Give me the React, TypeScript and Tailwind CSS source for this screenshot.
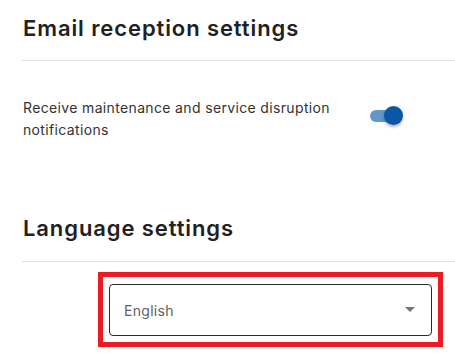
import React, { useState } from 'react';

const font = { fontFamily: 'Inter, "Noto Sans", sans-serif' };

const Toggle = ({ on, onChange }: { on: boolean; onChange: () => void }) => (
  <button
    type="button"
    onClick={onChange}
    className="relative h-[20px] w-[36px] shrink-0 cursor-pointer"
    aria-pressed={on}
  >
    <span className={`absolute left-[2px] top-[4px] h-[12px] w-[30px] rounded-full ${on ? 'bg-[#6397c9]' : 'bg-[#bdbdbd]'}`} />
    <span
      className={`absolute top-0 h-[19px] w-[19px] rounded-full shadow-[0_2px_3px_rgba(0,0,0,0.3)] ${on ? 'left-[16px] bg-[#0a57a5]' : 'left-0 bg-[#fafafa]'}`}
    />
  </button>
);

export default function App() {
  const [notify, setNotify] = useState(true);
  const [lang, setLang] = useState('English');

  return (
    <div className="min-h-screen bg-white pl-[22px] pt-[12px]" style={font}>
      <section>
        <h2 className="pl-px text-[22px] font-semibold leading-[32px] tracking-[0.9px] text-[#212121]">Email reception settings</h2>
        <div className="mt-[16px] h-px bg-[#e0e0e0]" />
        <div className="mt-[36px] flex items-center">
          <p className="w-[335px] pl-px text-[14px] leading-[22px] tracking-[0.35px] text-[#333333]">
            Receive maintenance and service disruption notifications
          </p>
          <div className="ml-[11px]">
            <Toggle on={notify} onChange={() => setNotify(!notify)} />
          </div>
        </div>
      </section>

      <section className="mt-[71px]">
        <h2 className="pl-px text-[22px] font-semibold leading-[32px] tracking-[0.9px] text-[#212121]">Language settings</h2>
        <div className="mt-[17px] h-px bg-[#e0e0e0]" />
        <div className="ml-[76px] mt-[10px] w-[345px] border-[5px] border-[#ec1c24] px-[6px] pb-[6px] pt-[7px]">
          <label className="relative flex h-[52px] items-center rounded-[4px] border border-[#2b2b2b]">
            <select
              value={lang}
              onChange={(e) => setLang(e.target.value)}
              className="h-full w-full appearance-none bg-transparent pl-[14px] text-[14px] tracking-[0.3px] text-[#616161] outline-none"
              style={font}
            >
              <option>English</option>
              <option>日本語</option>
            </select>
            <svg className="pointer-events-none absolute right-[16px] top-[22px]" width="10" height="5" viewBox="0 0 10 5">
              <path d="M0 0h10L5 5z" fill="#757575" />
            </svg>
          </label>
        </div>
      </section>
    </div>
  );
}
